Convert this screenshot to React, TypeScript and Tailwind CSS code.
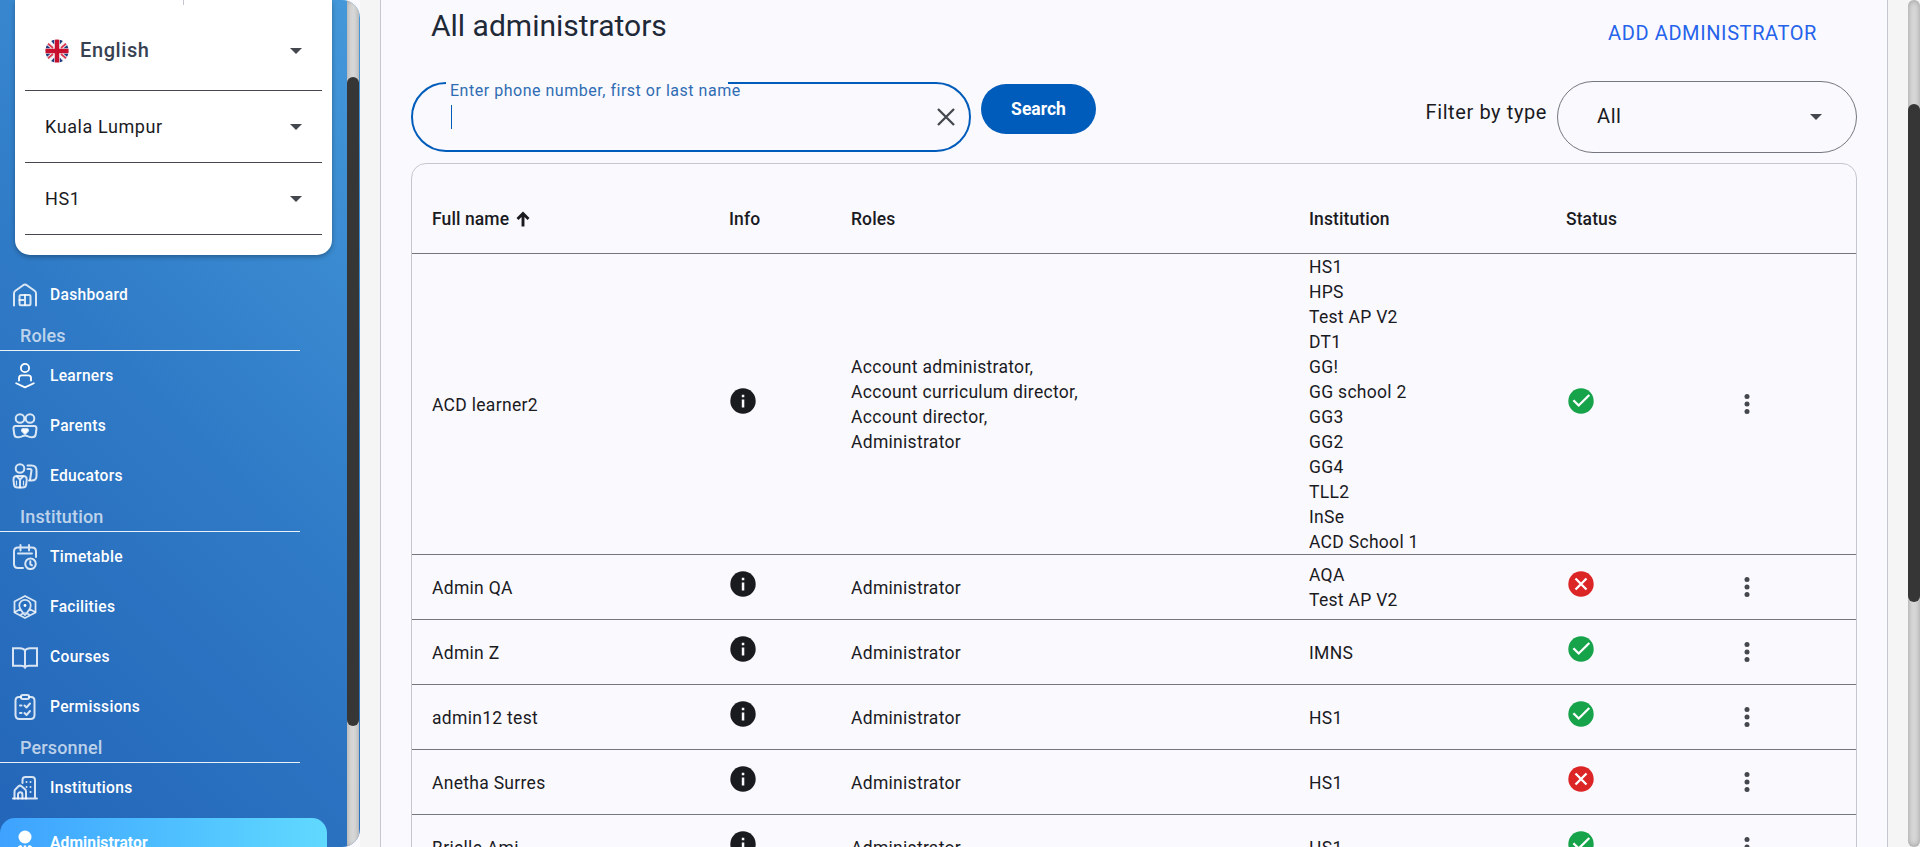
import React from 'react';

type IconProps = { children: React.ReactNode };

const NavIcon = ({ children }: IconProps) => (
  <svg
    viewBox="0 0 26 26"
    className="h-[26px] w-[26px] shrink-0"
    fill="none"
    stroke="#ffffff"
    strokeOpacity={0.82}
    strokeWidth={2}
    strokeLinecap="round"
    strokeLinejoin="round"
  >
    {children}
  </svg>
);

const icons: Record<string, React.ReactNode> = {
  dashboard: (
    <>
      <path d="M2 23.5V11.5Q2 9.8 3.4 8.8L11.2 3.2Q13 2 14.8 3.2L22.6 8.8Q24 9.8 24 11.5V23.5" />
      <rect x="7.5" y="13" width="11" height="10.2" rx="1.5" />
      <path d="M13 13v10M7.5 18H13" />
    </>
  ),
  learners: (
    <g strokeOpacity={1} strokeWidth={1.8}>
      <circle cx="13" cy="5" r="4.1" />
      <path d="M7 17.5V15q0-2.6 2.6-2.6h6.8Q19 12.400 19 15v2.500" />
      <path d="M4.200 20.300L13 24.400L21.800 20.300" />
    </g>
  ),
  parents: (
    <>
      <circle cx="8" cy="5.500" r="4.300" />
      <circle cx="18" cy="5.500" r="4.300" />
      <path d="M3.500 13h19q2 0 2 2.500l-.8 6q-.4 2.700-3.500 2.700-3 .2-5-1.200-2.200-1-4.400 0-2 1.400-5 1.200-3.100 0-3.500-2.700l-.8-6Q1.500 13 3.500 13z" />
      <path d="M13 20.800l-2.600-2.500q-1-1.400.3-2.200 1.300-.6 2.300.7 1-1.300 2.300-.7 1.300.8.3 2.200z" fill="#fff" />
    </>
  ),
  educators: (
    <>
      <circle cx="8" cy="5.500" r="4.300" />
      <path d="M5 13h6q4 0 3.700 4l-.5 4.500q-.5 3-3.500 3H5.500q-3 0-3.500-3L1.500 17Q1.300 13 5 13z" />
      <path d="M5 13.500l3 3 3-3M8 16.500v8" />
      <path d="M4.500 18v4M11.500 18v4" strokeWidth={1.2} />
      <path d="M15.500 2.500h4q5 0 5 5v5.500q0 4.500-5 4.500h-2.500" />
      <path d="M15.500 6h2.500q1.500 0 1.500 1.500l-1.500 9.500" />
    </>
  ),
  timetable: (
    <>
      <path d="M11 24H6q-4 0-4-4V7.500q0-4 4-4h14q4 0 4 4V13M8.500 1v5.500M17 1v5.500M6 9.500h14" />
      <circle cx="18.500" cy="19.800" r="5.300" />
      <path d="M18.300 17.300v3l1.700 1" />
    </>
  ),
  facilities: (
    <g strokeWidth={1.8}>
      <path d="M13 2l10.500 5.500v11L13 24 2.500 18.500v-11z" />
      <path d="M13 21q-5.700-6-5.700-9.500a5.700 5.700 0 0 1 11.400 0Q18.700 15 13 21zM3 18l5.500-3M23 18l-5.500-3M9 20.500l3-1.500M17 20.500L14 19" />
      <circle cx="13" cy="11.500" r="1.400" fill="#fff" stroke="none" />
    </g>
  ),
  courses: (
    <path
      d="M13 6.500Q11.500 4.200 8 4.200H1v17.500h8q3 0 4 1.800 1-1.800 4-1.800h8V4.200h-7q-3.500 0-5 2.300zm0 0v16.500"
      strokeLinejoin="miter"
    />
  ),
  permissions: (
    <>
      <path d="M9 3H7Q3.500 3 3.500 6.500v14.500Q3.500 25 7.500 25h11q4 0 4-4V6.500Q22.500 3 19 3h-2" />
      <rect x="8.800" y="1" width="8.400" height="4" rx="2" />
      <path d="M12.500 11.500l2 2 3.500-4M12.500 19l2 2 3.500-4M8 11.500h1.500M8 19h1.500" />
    </>
  ),
  institutions: (
    <>
      <path d="M1 23.500h24M10.500 8V5q0-3 3-3H20q3 0 3 3v18" />
      <path d="M2.500 23.500v-7q0-1.500 1-2.300l3-3q1.500-1.200 3 0l3.500 3q1 .8 1 2.300v7" />
      <path d="M6 23.500v-4a2.200 2.200 0 0 1 4.400 0v4" />
      <path d="M14.500 7v.1M18.500 7v.1M18.500 12v.1M14.500 12v.1M18.500 17v.1" />
    </>
  ),
  administrator: (
    <>
      <circle cx="13" cy="7" r="6.500" fill="#fff" stroke="none" />
      <path d="M5 26v-6q0-4.500 4-5l4 5.500 4-5.500q4 .5 4 5v6z" fill="#fff" stroke="none" />
      <path d="M11.600 15.500h2.800l-.7 3h-1.400z" fill="#fff" stroke="none" />
    </>
  ),
};

const NavItem = ({ icon, label, active }: { icon: string; label: string; active?: boolean }) => (
  <div
    className={
      active
        ? 'mt-[5px] flex h-[50px] w-[327px] shrink-0 items-center gap-3 rounded-[15px] bg-linear-to-r from-[#3ea2ff] to-[#60d9ff] pl-3 text-[15.6px] font-bold tracking-[0.1px] text-white'
        : 'flex h-[50px] shrink-0 items-center gap-3 pl-3 text-[15.6px] font-medium tracking-[0.3px] text-white'
    }
  >
    <NavIcon>{icons[icon]}</NavIcon>
    <span className="pt-[2px]">{label}</span>
  </div>
);

const NavHeading = ({ label }: { label: string }) => (
  <div className="h-[31px] w-[300px] shrink-0 border-b border-white/90 pl-5 text-[18px] leading-[32px] font-medium tracking-[0.15px] text-white/70">
    {label}
  </div>
);

const Caret = () => (
  <svg viewBox="0 0 12 6" className="h-[6px] w-[12px]" fill="#44474e">
    <path d="M0 0h12L6 6z" />
  </svg>
);

const Flag = () => (
  <svg viewBox="0 0 24 24" className="mr-[11px] h-6 w-6">
    <clipPath id="round">
      <circle cx="12" cy="12" r="11.600" />
    </clipPath>
    <g clipPath="url(#round)">
      <rect width="24" height="24" fill="#f3f3f7" />
      <path
        d="M4.500 0h4.700v5.500zM0 4.500v4.700h5.500zM19.500 0h-4.700v5.500zM24 4.500v4.700h-5.500zM4.500 24h4.700v-5.500zM0 19.500v-4.700h5.500zM19.500 24h-4.700v-5.500zM24 19.500v-4.700h-5.500z"
        fill="#1d3a7d"
      />
      <path d="M1 3l7 6M23 3l-7 6M1 21l7-6M23 21l-7-6" stroke="#dc3a50" strokeWidth="1.800" />
      <path d="M12 0v24M0 12h24" stroke="#c8102e" strokeWidth="4.400" />
    </g>
  </svg>
);

const InfoIcon = () => (
  <svg viewBox="0 0 26 26" className="h-[26px] w-[26px]">
    <circle cx="13" cy="13" r="12.700" fill="#1a1b1f" />
    <path d="M11.800 6.700h2.500v2.500h-2.500zM11.800 11.500h2.500v8h-2.500z" fill="#faf9fd" />
  </svg>
);

const StatusIcon = ({ ok }: { ok: boolean }) => (
  <svg viewBox="0 0 26 26" className="h-[26px] w-[26px]" fill="none" stroke="#ffffff" strokeWidth="2.300">
    <circle cx="13" cy="13" r="12.700" fill={ok ? '#16a34a' : '#dc2626'} stroke="none" />
    {ok ? <path d="M5.400 12.200l5.300 5.300L21.300 7" /> : <path d="M7.500 7.500l11 11M18.500 7.500l-11 11" />}
  </svg>
);

type Row = { name: string; roles: string[]; institutions: string[]; ok: boolean };

const rows: Row[] = [
  {
    name: 'ACD learner2',
    roles: ['Account administrator,', 'Account curriculum director,', 'Account director,', 'Administrator'],
    institutions: ['HS1', 'HPS', 'Test AP V2', 'DT1', 'GG!', 'GG school 2', 'GG3', 'GG2', 'GG4', 'TLL2', 'InSe', 'ACD School 1'],
    ok: true,
  },
  { name: 'Admin QA', roles: ['Administrator'], institutions: ['AQA', 'Test AP V2'], ok: false },
  { name: 'Admin Z', roles: ['Administrator'], institutions: ['IMNS'], ok: true },
  { name: 'admin12 test', roles: ['Administrator'], institutions: ['HS1'], ok: true },
  { name: 'Anetha Surres', roles: ['Administrator'], institutions: ['HS1'], ok: false },
  { name: 'Brielle Ami', roles: ['Administrator'], institutions: ['HS1'], ok: true },
];

const Lines = ({ items }: { items: string[] }) => (
  <div className="-mb-px pt-px">
    {items.map((t) => (
      <div key={t}>{t}</div>
    ))}
  </div>
);

const Sidebar = () => (
  <aside className="flex h-[847px] w-[360px] shrink-0 overflow-hidden rounded-r-[18px] bg-[linear-gradient(45deg,#2365b8_0%,#2f7ac6_50%,#4499da_100%)] pr-px">
    <div className="flex w-[347px] shrink-0 flex-col overflow-hidden">
      <div className="mb-[15px] ml-[15px] flex h-[255px] w-[317px] shrink-0 flex-col rounded-b-[15px] bg-white px-[10px] shadow-[0_2px_5px_rgba(0,0,0,0.3)]">
        <div className="ml-[158px] h-[5px] w-px shrink-0 bg-[#c4c6d0]" />
        <div className="flex h-[86px] items-center border-b border-[#44474e] pt-[6px] pr-5 pl-5">
          <Flag />
          <span className="flex-1 pb-[2px] text-[20px] leading-6 font-medium tracking-[0.6px] text-[#374151]">English</span>
          <Caret />
        </div>
        <div className="flex h-[72px] items-center border-b border-[#44474e] px-5">
          <span className="flex-1 text-[18px] tracking-[0.6px] text-[#1a1b1f]">Kuala Lumpur</span>
          <Caret />
        </div>
        <div className="flex h-[72px] items-center border-b border-[#44474e] px-5">
          <span className="flex-1 text-[18px] tracking-[0.6px] text-[#1a1b1f]">HS1</span>
          <Caret />
        </div>
      </div>
      <NavItem icon="dashboard" label="Dashboard" />
      <NavHeading label="Roles" />
      <NavItem icon="learners" label="Learners" />
      <NavItem icon="parents" label="Parents" />
      <NavItem icon="educators" label="Educators" />
      <NavHeading label="Institution" />
      <NavItem icon="timetable" label="Timetable" />
      <NavItem icon="facilities" label="Facilities" />
      <NavItem icon="courses" label="Courses" />
      <NavItem icon="permissions" label="Permissions" />
      <NavHeading label="Personnel" />
      <NavItem icon="institutions" label="Institutions" />
      <NavItem icon="administrator" label="Administrator" active />
    </div>
    <div className="h-full w-3 bg-[#dadada] pt-[77px] shadow-[inset_0_0_6px_rgba(0,0,0,0.3)]">
      <div className="h-[649px] w-3 rounded-[6px] bg-[#363636]" />
    </div>
  </aside>
);

const columns = 'grid grid-cols-[297px_122px_458px_257px_1fr] pl-[20px]';

export default function App() {
  return (
    <div className="flex h-[847px] w-[1920px] overflow-hidden bg-[#f5f5f5] font-['Roboto',sans-serif] text-[#1a1b1f]">
      <div className="w-[360px] shrink-0 bg-[#faf9fd]">
        <Sidebar />
      </div>
      <main className="ml-5 flex h-full w-[1508px] shrink-0 flex-col border-x border-[#c4c6d0] bg-[#faf9fe] px-[30px]">
        <div className="flex h-[81px] shrink-0 items-start justify-between pr-10 pl-5">
          <h1 className="pt-[6px] text-[30px] leading-10 text-[#1f2937]">All administrators</h1>
          <button className="pt-[21px] text-[20px] leading-6 tracking-[0.6px] text-[#2563eb]">ADD ADMINISTRATOR</button>
        </div>
        <div className="flex h-[82px] shrink-0 items-start">
          <div className="relative mt-px flex h-[70px] w-[560px] items-center rounded-[35px] border-2 border-[#005cbb] pr-[14px] pl-[38px]">
            <div className="absolute -top-[2px] left-[33px] h-[2px] w-[282px] bg-[#faf9fe]" />
            <span className="absolute top-[-2px] left-[37px] text-[16px] leading-[18px] tracking-[0.52px] whitespace-nowrap text-[#2f6cb3]">
              Enter phone number, first or last name
            </span>
            <div className="h-6 w-px flex-1">
              <div className="h-6 w-px bg-[#005cbb]" />
            </div>
            <svg viewBox="0 0 18 18" className="h-[18px] w-[18px]" stroke="#44474e" strokeWidth="2.300">
              <path d="M1 1l16 16M17 1L1 17" />
            </svg>
          </div>
          <button className="mt-[3px] ml-[10px] h-[50px] w-[115px] rounded-[25px] bg-[#005cbb] text-[17.5px] font-bold text-white">
            Search
          </button>
          <span className="mt-[19px] ml-auto text-[20px] leading-6 tracking-[0.6px]">Filter by type</span>
          <div className="ml-[10px] flex h-[72px] w-[300px] items-center justify-between rounded-[36px] border border-[#74777f] pr-[34px] pl-[39px]">
            <span className="pb-[2px] text-[20px] leading-6 tracking-[0.6px]">All</span>
            <Caret />
          </div>
        </div>
        <div className="h-[900px] shrink-0 rounded-[15px] border border-[#c4c6d0] text-[17.5px] leading-[25px]">
          <div className={`${columns} h-[90px] items-center border-b border-[#74777f] pt-[21px] font-medium tracking-[0.1px]`}>
            <div className="flex items-center gap-[7px]">
              Full name
              <svg viewBox="0 0 14 16" className="h-4 w-[14px]" fill="none" stroke="#1a1b1f" strokeWidth="2.900">
                <path d="M7 15.500V3M1.500 8L7 2.500 12.500 8" />
              </svg>
            </div>
            <div>Info</div>
            <div>Roles</div>
            <div>Institution</div>
            <div>Status</div>
          </div>
          {rows.map((r) => (
            <div key={r.name} className={`${columns} min-h-[65px] items-center border-b border-[#74777f] tracking-[0.3px]`}>
              <Lines items={[r.name]} />
              <div className="pb-[7px] pl-px">
                <InfoIcon />
              </div>
              <Lines items={r.roles} />
              <Lines items={r.institutions} />
              <div className="flex items-center">
                <div className="pb-[7px] pl-[2px]">
                  <StatusIcon ok={r.ok} />
                </div>
                <svg viewBox="0 0 6 20" className="ml-[150px] h-5 w-[6px]" fill="#44474e">
                  <circle cx="3" cy="2.600" r="2.500" />
                  <circle cx="3" cy="10" r="2.500" />
                  <circle cx="3" cy="17.400" r="2.500" />
                </svg>
              </div>
            </div>
          ))}
        </div>
      </main>
      <div className="ml-5 h-full w-3 shrink-0 rounded-[6px] bg-[#dadada] pt-[104px] shadow-[inset_0_0_6px_rgba(0,0,0,0.3)]">
        <div className="h-[498px] w-3 rounded-[6px] bg-[#363636]" />
      </div>
    </div>
  );
}
